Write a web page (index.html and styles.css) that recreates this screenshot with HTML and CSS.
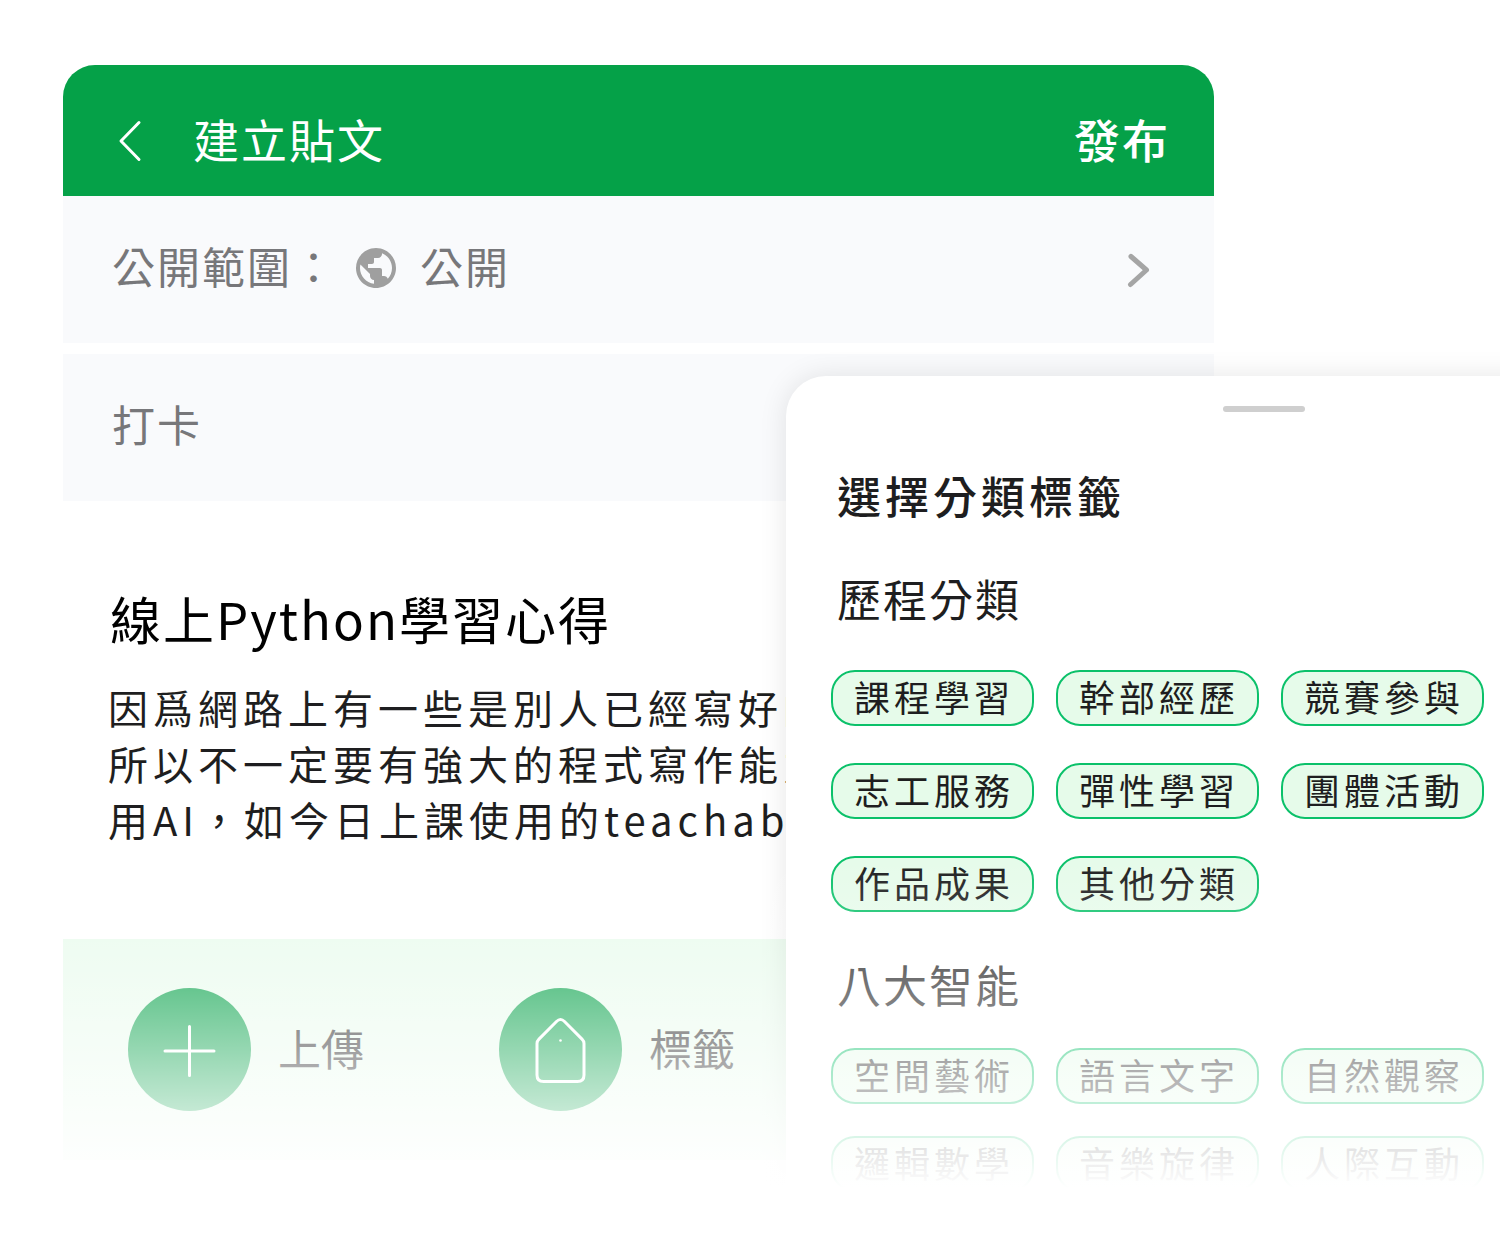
FILE: index.html
```html
<!DOCTYPE html>
<html lang="zh-Hant">
<head>
    <meta charset="UTF-8">
    <meta name="viewport" content="width=device-width, initial-scale=1.0">
    <title>建立貼文</title>
    <link rel="stylesheet" href="styles.css">
</head>
<body>
    <div class="scene">
        <main class="phone">
            <header class="topbar">
                <button class="back" aria-label="返回">
                    <svg width="24" height="42" viewBox="0 0 24 42"><path d="M21 2.500L3 21l18 18.500"/></svg>
                </button>
                <h1 class="page-title">建立貼文</h1>
                <button class="publish">發布</button>
            </header>

            <button class="row">
                <span class="row-text">公開範圍：</span>
                <svg class="globe" width="48" height="48" viewBox="0 0 24 24"><path d="M12 2C6.480 2 2 6.480 2 12s4.480 10 10 10 10-4.480 10-10S17.520 2 12 2zm-1 17.930c-3.950-.49-7-3.850-7-7.930 0-.62.08-1.210.21-1.790L9 15v1c0 1.100.9 2 2 2v1.930zm6.900-2.540c-.26-.81-1-1.390-1.900-1.390h-1v-3c0-.55-.45-1-1-1H8v-2h2c.55 0 1-.45 1-1V7h2c1.100 0 2-.9 2-2v-.41c2.930 1.190 5 4.060 5 7.410 0 2.080-.8 3.970-2.100 5.390z"/></svg>
                <span class="row-text">公開</span>
                <svg class="arrow" width="24" height="40" viewBox="0 0 24 40"><path d="M4 8.500L19.500 22l-16 14.500"/></svg>
            </button>
            <button class="row">
                <span class="row-text">打卡</span>
            </button>

            <section class="post">
                <input class="post-title" type="text" aria-label="標題" value="線上Python學習心得">
                <textarea class="post-text" rows="3" aria-label="內容" spellcheck="false">因爲網路上有一些是別人已經寫好的
所以不一定要有強大的程式寫作能力
用AI，如今日上課使用的teachable</textarea>
            </section>

            <footer class="tools">
                <button class="tool">
                    <span class="circle">
                        <svg width="64" height="72" viewBox="0 0 64 72"><path d="M31.500 12.500v49M7 37h49"/></svg>
                    </span>
                    <span class="tool-text">上傳</span>
                </button>
                <button class="tool">
                    <span class="circle">
                        <svg width="64" height="72" viewBox="0 0 64 72">
                            <path d="M8 29.500c0-2 .6-3 2-4.400L27.500 7.500q4-4 8 0L53 25.100c1.400 1.400 2 2.400 2 4.400V61q0 6.500-6.500 6.500h-34Q8 67.500 8 61z"/>
                            <circle cx="31.500" cy="26.500" r="1.300"/>
                        </svg>
                    </span>
                    <span class="tool-text">標籤</span>
                </button>
            </footer>
        </main>

        <section class="sheet">
            <div class="handle"></div>
            <h2 class="sheet-title">選擇分類標籤</h2>

            <h3 class="group-title">歷程分類</h3>
            <div class="chips">
                <button class="chip">課程學習</button>
                <button class="chip">幹部經歷</button>
                <button class="chip">競賽參與</button>
                <button class="chip">志工服務</button>
                <button class="chip">彈性學習</button>
                <button class="chip">團體活動</button>
                <button class="chip">作品成果</button>
                <button class="chip">其他分類</button>
            </div>

            <h3 class="group-title">八大智能</h3>
            <div class="chips tight">
                <button class="chip">空間藝術</button>
                <button class="chip">語言文字</button>
                <button class="chip">自然觀察</button>
                <button class="chip">邏輯數學</button>
                <button class="chip">音樂旋律</button>
                <button class="chip">人際互動</button>
            </div>
        </section>

        <div class="fade"></div>
    </div>
</body>
</html>
```

FILE: styles.css
```css
* { box-sizing: border-box; }
body {
    margin: 0;
    background-color: white;
    font-family: "Noto Sans CJK TC", sans-serif;
    color: #1e1e20;
}
h1, h2, h3 { margin: 0; }
button, input, textarea {
    margin: 0; padding: 0;
    border: none; background: none;
    font: inherit; color: inherit;
}
button { cursor: pointer; }
svg { display: block; fill: none; stroke-linecap: round; stroke-linejoin: round; }

.scene {
    position: relative;
    min-height: 100vh;
    padding: 65px 286px 0 63px;
    overflow: hidden;
}

/* post editor */
.topbar {
    display: flex; align-items: center;
    height: 131px;
    padding: 20px 44px 0 55px;
    border-radius: 32px 32px 0 0;
    background-color: #05a148;
    color: white;
}
.back svg { stroke: white; stroke-width: 3; }
.page-title, .publish { padding-bottom: 5px; font-size: 46px; line-height: 60px; letter-spacing: 2px; }
.page-title { margin-left: 51px; font-weight: 400; }
.publish { margin-left: auto; font-weight: 500; }

.row {
    display: flex; align-items: center;
    width: 100%; height: 147px;
    margin-bottom: 11px;
    padding: 0 63px 4px 49px;
    background-color: #f9fafc;
    color: #77777a;
    font-size: 43px; line-height: 60px; letter-spacing: 2px;
}
.row-text { padding-bottom: 6px; }
.globe { margin: 0 20px 0 15px; fill: #9f9f9f; }
.arrow { margin-left: auto; stroke: #a5a5a5; stroke-width: 5; }

.post { height: 427px; padding: 68px 40px 0 45px; }
.post-title {
    display: block; width: 100%; height: 76px;
    padding-left: 2px;
    color: black;
    font-size: 51px; letter-spacing: 2px;
}
.post-text {
    display: block; width: 100%; height: 168px;
    margin-top: 23px;
    overflow: hidden; resize: none;
    font-size: 40px; line-height: 56px; letter-spacing: 5px;
}

.tools {
    display: flex; gap: 135px;
    padding: 49px 65px;
    background-color: #e9fbed;
}
.tool { display: flex; align-items: center; gap: 27px; font-size: 43px; line-height: 60px; }
.tool-text { padding-bottom: 6px; }
.circle {
    display: flex; align-items: center; justify-content: center;
    width: 123px; height: 123px;
    border-radius: 50%;
    background-color: #05a148;
}
.circle svg { stroke: white; stroke-width: 3; }
.circle circle { fill: white; stroke: none; }

.sheet {
    position: absolute; top: 376px; left: 786px; right: -242px; bottom: 0;
    padding: 30px 252px 0 45px;
    border-radius: 40px 0 0 0;
    background-color: white;
    box-shadow: 0 0 28px rgba(0, 0, 0, 0.1);
}
.handle {
    width: 82px; height: 6px;
    margin-left: 392px;
    border-radius: 3px;
    background-color: #cfcfcf;
}
.sheet-title { margin: 53px 0 43px 6px; font-size: 44px; font-weight: 500; line-height: 60px; letter-spacing: 4px; }
.group-title { margin-left: 6px; font-size: 44px; font-weight: 400; line-height: 60px; letter-spacing: 2px; }
.chips { display: flex; flex-wrap: wrap; gap: 37px 22px; margin: 42px 0; }
.tight { row-gap: 32px; margin-top: 34px; }
.chip {
    height: 56px;
    padding: 0 18px 5px 21px;
    border: 2px solid #0bc16a;
    border-radius: 24px;
    background-color: #e6fbea;
    font-size: 36px; line-height: 46px; letter-spacing: 4px;
}

.fade {
    position: absolute; left: 0; right: 0; bottom: 0;
    height: 390px;
    background: linear-gradient(rgba(255, 255, 255, 0), white 328px);
    pointer-events: none;
}
```
